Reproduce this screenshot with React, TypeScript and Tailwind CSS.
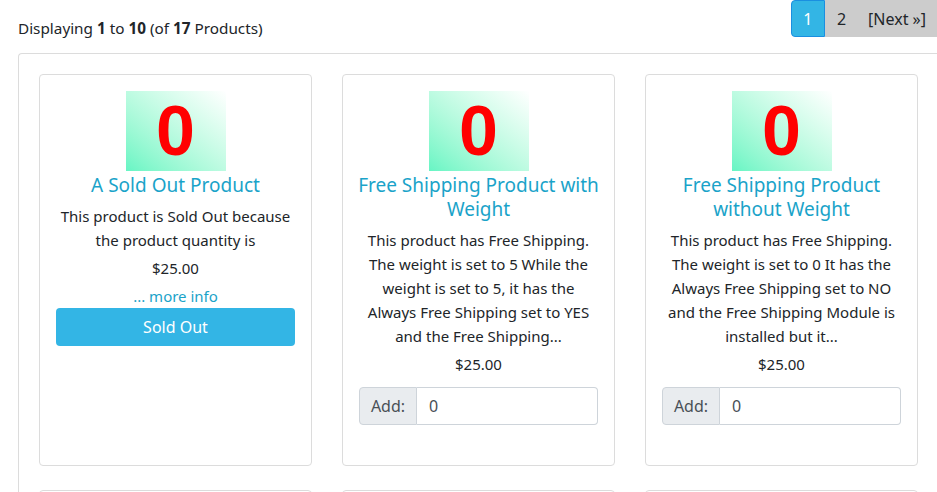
import React from "react";

const font = { fontFamily: '"Noto Sans", "Open Sans", sans-serif' };

type Product = {
	name: string[];
	desc: string[];
	soldOut?: boolean;
};

const products: Product[] = [
	{
		name: ["A Sold Out Product"],
		desc: ["This product is Sold Out because", "the product quantity is"],
		soldOut: true,
	},
	{
		name: ["Free Shipping Product with", "Weight"],
		desc: [
			"This product has Free Shipping.",
			"The weight is set to 5 While the",
			"weight is set to 5, it has the",
			"Always Free Shipping set to YES",
			"and the Free Shipping...",
		],
	},
	{
		name: ["Free Shipping Product", "without Weight"],
		desc: [
			"This product has Free Shipping.",
			"The weight is set to 0 It has the",
			"Always Free Shipping set to NO",
			"and the Free Shipping Module is",
			"installed but it...",
		],
	},
];

function ProductImage() {
	return (
		<div className="mx-auto flex h-[80px] w-[100px] items-center justify-center bg-gradient-to-tr from-[#66f5c4] to-white">
			<span
				className="text-[70px] leading-none font-bold text-[#ff0000]"
				style={{ fontFamily: '"Liberation Sans", Arial, sans-serif' }}
			>
				0
			</span>
		</div>
	);
}

function Card({ p }: { p: Product }) {
	return (
		<div className="flex h-[392px] w-[273px] flex-col items-center rounded border border-[#dcdcdc] px-4 pt-4 text-center">
			<ProductImage />
			<div className="mt-[2px] text-[19px] leading-6 whitespace-nowrap text-[#1aa3c9]">
				{p.name.map((l) => (
					<div key={l}>{l}</div>
				))}
			</div>
			<div className="mt-[7px] text-[15px] leading-6 text-[#212529]">
				{p.desc.map((l) => (
					<div key={l}>{l}</div>
				))}
			</div>
			<div className="mt-1 text-[15px] leading-6 text-[#212529]">$25.00</div>
			{p.soldOut ? (
				<>
					<div className="mt-1 text-[15px] leading-6 text-[#1aa3c9]">... more info</div>
					<div className="flex h-[38px] w-full items-center justify-center rounded bg-[#33b5e5] text-[16px] text-white">
						Sold Out
					</div>
				</>
			) : (
				<div className="mt-[11px] flex h-[38px] w-full text-[16px]">
					<div className="flex w-[58px] items-center justify-center rounded-l border border-[#ced4da] bg-[#e9ecef] text-[#495057]">
						Add:
					</div>
					<div className="flex flex-1 items-center rounded-r border border-l-0 border-[#ced4da] px-3 text-[#495057]">
						0
					</div>
				</div>
			)}
		</div>
	);
}

export default function App() {
	return (
		<div className="h-[492px] w-[937px] overflow-hidden bg-white" style={font}>
			<div className="flex items-start justify-between">
				<div className="pt-4 pl-[18px] text-[15.3px] leading-6 text-[#212529]">
					Displaying <b>1</b> to <b>10</b> (of <b>17</b> Products)
				</div>
				<div className="flex h-[37px] text-[16px]">
					<div className="flex w-[34px] items-center justify-center rounded-l border border-[#1a8fe0] bg-[#33b5e5] text-white">
						1
					</div>
					<div className="flex items-center bg-[#cccccc] pr-[11px] pl-[12px] text-[#212529]">
						<span>2</span>
						<span className="ml-[22px]">[Next »]</span>
					</div>
				</div>
			</div>
			<div className="mt-[13px] ml-[18px] rounded-tl border-t border-l border-[#dcdcdc] pt-5 pl-5">
				<div className="grid grid-cols-[273px_273px_273px_273px] gap-x-[30px] gap-y-[24px]">
					{products.map((p) => (
						<Card key={p.name[0]} p={p} />
					))}
					<div className="h-[392px] rounded border border-[#dcdcdc]" />
					<div className="h-[392px] rounded border border-[#dcdcdc]" />
					<div className="h-[392px] rounded border border-[#dcdcdc]" />
					<div className="h-[392px] rounded border border-[#dcdcdc]" />
				</div>
			</div>
		</div>
	);
}
